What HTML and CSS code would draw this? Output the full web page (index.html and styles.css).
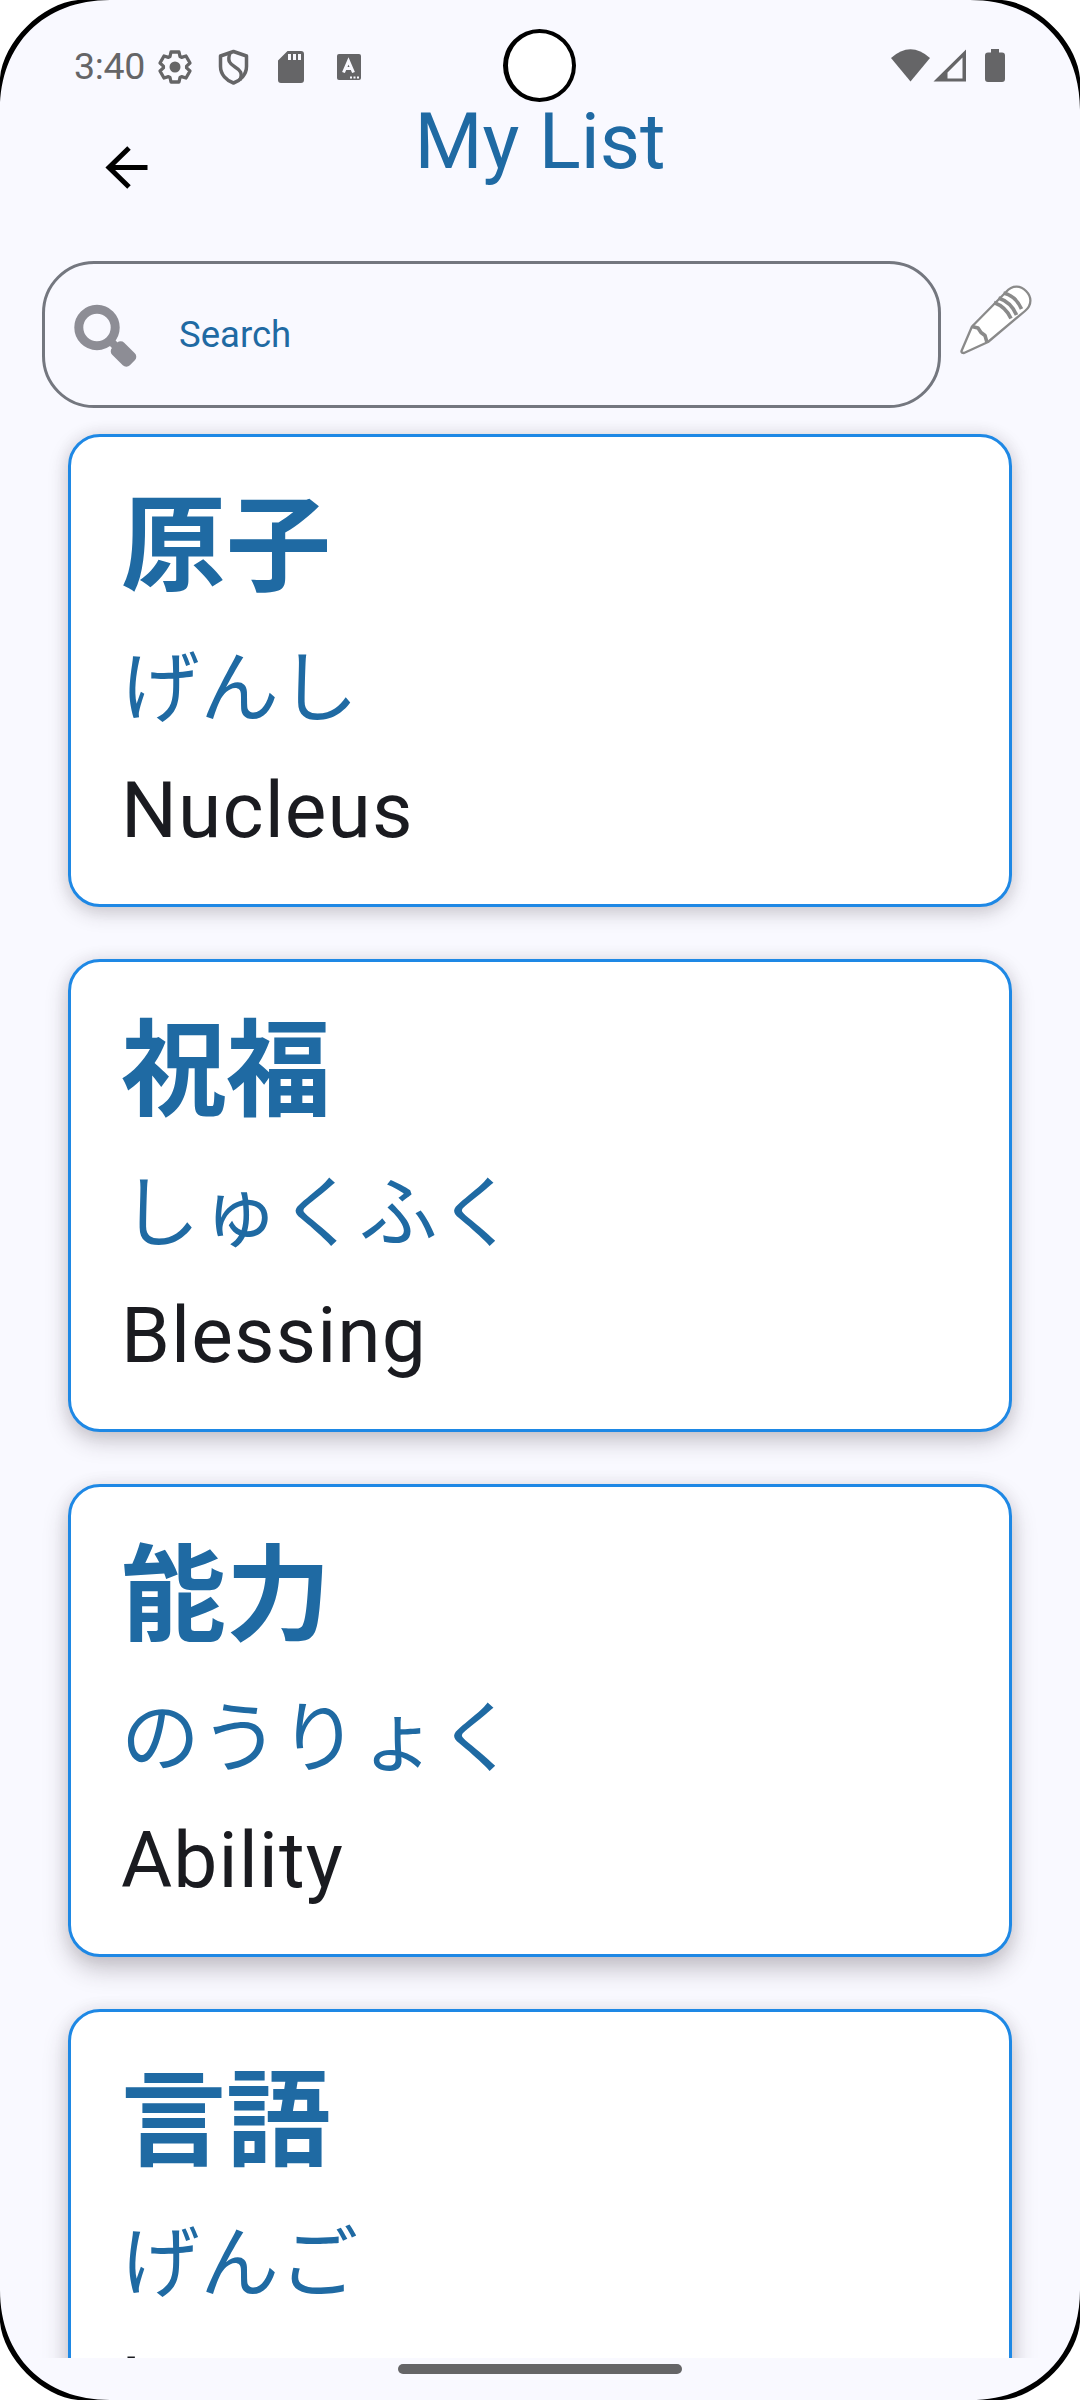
FILE: index.html
```html
<!DOCTYPE html>
<html lang="ja">
<head>
<meta charset="utf-8">
<title>My List</title>
<link rel="stylesheet" href="styles.css">
</head>
<body>
<div class="screen">
  <div class="status">
    <span class="time">3:40</span>
    <svg class="left-icons" width="220" height="44" viewBox="0 0 220 44">
      <g fill="none" stroke="#656567" stroke-linejoin="round">
        <path d="M-4-15H4L5-10.500 6.600-9.600 11-11 15-4 11.600-.9V.9L15 4 11 11 6.600 9.600 5 10.500 4 15H-4L-5 10.500-6.600 9.600-11 11-15 4-11.600.9V-.9L-15-4-11-11-6.600-9.600-5-10.500z" transform="translate(20 23)" stroke-width="3.300"/>
        <path d="M78.500 7.500l13 4.500v10.500c0 8-6 14-13 16.500-7-2.500-13-8.500-13-16.500V12z" stroke-width="3.500"/>
        <path d="M75 9c-3 8 0 11 5 14s8 6 5 13" stroke-width="3.500"/>
      </g>
      <g fill="#656567">
        <circle cx="20" cy="23" r="5.500"/>
        <path d="M132.500 7H146q3 0 3 3v26q0 3-3 3h-20q-3 0-3-3V16.500zM133 10v6h3v-6zm5 0v6h3v-6zm5 0v6h3v-6z" fill-rule="evenodd"/>
        <rect x="182" y="10" width="24" height="26" rx="2"/>
      </g>
      <path d="M188.500 28.500l5-11.500 5 11.500m-8-4h6" fill="none" stroke="#f9f9ff" stroke-width="3"/>
      <path d="M195 33.500h2m1.500 0h2m1.500 0h2" stroke="#f9f9ff" stroke-width="2"/>
    </svg>
    <svg class="right-icons" width="116" height="40" viewBox="0 0 116 40" fill="#656567">
      <path d="M0 14Q19.500-3.500 39 14L19.500 37.500z"/>
      <path d="M75 5.500V37.500H42.500zM71.500 13.500L56.500 28.500V34.500H71.500z" fill-rule="evenodd"/>
      <path d="M100 5h8v3.500h3q3 0 3 3V35q0 3-3 3H97q-3 0-3-3V11.500q0-3 3-3h3z"/>
    </svg>
  </div>
  <header class="header">
    <svg class="back" width="44" height="44" viewBox="0 0 44 44"><path d="M42.500 22.500H4M24 3L4 22.500l20 19.500" fill="none" stroke="#000" stroke-width="5"/></svg>
    <h1 class="title">My List</h1>
  </header>
  <div class="search-row">
    <div class="search">
      <svg class="magnifier" width="64" height="64" viewBox="0 0 64 64">
        <circle cx="24" cy="24.500" r="18.200" fill="none" stroke="#8d8d95" stroke-width="9"/>
        <path d="M36 36.500l8 8" stroke="#8d8d95" stroke-width="8"/>
        <rect x="-12.500" y="-8.500" width="25" height="17" rx="5" transform="translate(50.500 51) rotate(45)" fill="#8d8d95"/>
      </svg>
      <span class="placeholder">Search</span>
    </div>
    <svg class="pencil" width="76" height="76" viewBox="0 0 76 76" fill="#fff" stroke="#8a8a8a" stroke-width="2.300" stroke-linejoin="round">
      <path d="M2.500 68L13 43.500 47 9C54 1 62 3 67 8s7 13-1 20L29 59 5 70q-3 0-2.500-2z"/>
      <path d="M13 43.500l6 1.500 3 4.500 4 3 2 7" fill="none" stroke-width="3.600"/>
      <path d="M35 19.500Q47 24 52 35.500M39.500 15Q52 19 57.500 32M44.500 10Q57 13 62.500 26" fill="none" stroke-width="3.600"/>
    </svg>
  </div>
  <main class="list">
    <article class="card"><div class="kanji">原子</div><div class="kana">げんし</div><div class="meaning">Nucleus</div></article>
    <article class="card"><div class="kanji">祝福</div><div class="kana">しゅくふく</div><div class="meaning">Blessing</div></article>
    <article class="card"><div class="kanji">能力</div><div class="kana">のうりょく</div><div class="meaning">Ability</div></article>
    <article class="card"><div class="kanji">言語</div><div class="kana">げんご</div><div class="meaning">Language</div></article>
  </main>
  <footer class="nav"><div class="pill"></div></footer>
  <div class="camera"></div>
  <svg class="frame" width="1080" height="2400" viewBox="0 0 1080 2400">
    <defs>
      <g id="corner">
        <path d="M0 0H110C44 0 0 44 0 110z" fill="#000"/>
        <path d="M0 0H78C42 3 3 42 0 78z" fill="#fff"/>
      </g>
    </defs>
    <use href="#corner"/>
    <use href="#corner" transform="translate(1080 0) scale(-1 1)"/>
    <use href="#corner" transform="translate(0 2400) scale(1 -1)"/>
    <use href="#corner" transform="translate(1080 2400) scale(-1 -1)"/>
  </svg>
</div>
</body>
</html>
```
FILE: styles.css
```css
* { box-sizing: border-box; }
body { margin: 0; background: #f9f9ff; font-family: Roboto, "Noto Sans CJK JP", sans-serif; }
.screen { position: relative; width: 1080px; height: 2400px; overflow: hidden; display: flex; flex-direction: column; background: #f9f9ff; }
.status { height: 105px; flex: none; display: flex; align-items: flex-start; padding: 44px 0 0 74px; color: #656567; }
.time { font-size: 37.500px; line-height: 45px; width: 81px; letter-spacing: -.3px; white-space: nowrap; }
.left-icons { flex: none; }
.right-icons { margin-left: auto; margin-right: 73px; }
.header { height: 156px; flex: none; display: grid; grid-template-columns: 250px 1fr 250px; }
.back { margin: 40px 0 0 105px; }
.title { margin: -9px 0 0; text-align: center; font-size: 78px; line-height: 92px; font-weight: 400; color: #1f6aa3; }
.search-row { height: 147px; flex: none; display: flex; padding-left: 42px; }
.search { width: 899px; border: 3px solid #74777f; border-radius: 52px; display: flex; align-items: center; padding-left: 28px; }
.magnifier { flex: none; }
.placeholder { margin-left: 42px; font-size: 36.500px; line-height: 44px; color: #1f6aa3; }
.pencil { margin: 22px 0 0 18px; }
.list { flex: none; height: 1950px; display: flex; flex-direction: column; gap: 52px; padding: 26px 68px 0; overflow: hidden; }
.card { height: 473px; flex: none; border: 3px solid #1e88e5; border-radius: 32px; background: #fff; padding: 40px 50px 0; box-shadow: 0 6px 20px rgba(50, 40, 50, .22), 0 0 16px rgba(50, 40, 50, .08); }
.card:nth-child(2) { box-shadow: 0 9px 22px rgba(50, 40, 50, .25), 0 0 16px rgba(50, 40, 50, .08); }
.card:nth-child(n+3) { box-shadow: 0 12px 24px rgba(50, 40, 50, .27), 0 0 16px rgba(50, 40, 50, .08); }
.kanji { font-size: 105px; line-height: 140px; font-weight: 700; color: #1f6aa3; }
.kana { font-size: 78.750px; line-height: 144px; letter-spacing: .5px; color: #1f6aa3; }
.meaning { font-size: 78.500px; line-height: 99px; letter-spacing: 1.100px; color: #1a1b20; }
.nav { flex: 1; display: flex; justify-content: center; padding-top: 6px; }
.pill { width: 284px; height: 10px; border-radius: 5px; background: #656567; }
.camera { position: absolute; left: 503px; top: 29px; width: 73px; height: 73px; border-radius: 50%; border: 4px solid #000; border-left-width: 5px; background: #fff; }
.frame { position: absolute; inset: 0; pointer-events: none; }
```
